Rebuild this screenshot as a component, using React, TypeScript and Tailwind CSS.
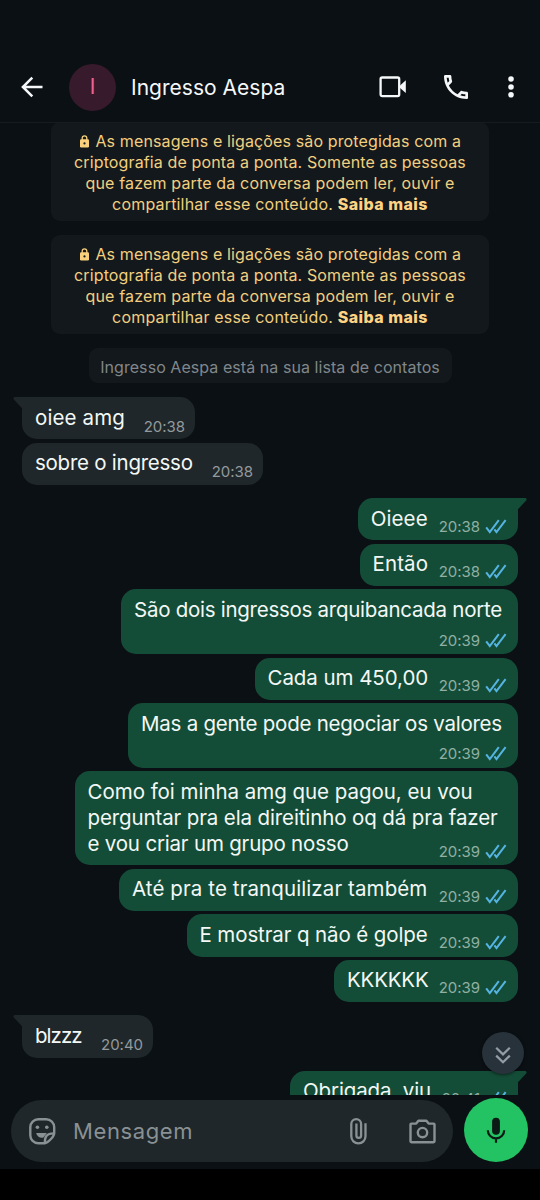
import React from "react";

type Message = {
  lines: [text: string, tracking: string][];
  time: string;
  sent?: boolean;
  first?: boolean;
  size: string;
};

const ONE = "h-[42.4px]";

const messages: Message[] = [
  { lines: [["oiee amg", "tracking-[0.12px]"]], time: "20:38", first: true, size: `${ONE} w-[173px]` },
  { lines: [["sobre o ingresso", "tracking-[-0.25px]"]], time: "20:38", size: `${ONE} w-[241px]` },
  { lines: [["Oieee", "tracking-[0.1px]"]], time: "20:38", sent: true, first: true, size: `${ONE} w-[160.3px]` },
  { lines: [["Então", "tracking-[0.1px]"]], time: "20:38", sent: true, size: `${ONE} w-[158.5px]` },
  {
    lines: [["São dois ingressos arquibancada norte", "tracking-[-0.265px]"]],
    time: "20:39",
    sent: true,
    size: "h-[65.2px] w-[397px] flex-col",
  },
  { lines: [["Cada um 450,00", "tracking-[-0.06px]"]], time: "20:39", sent: true, size: `${ONE} w-[263.5px]` },
  {
    lines: [["Mas a gente pode negociar os valores", "tracking-[-0.245px]"]],
    time: "20:39",
    sent: true,
    size: "h-[65.2px] w-[390px] flex-col",
  },
  {
    lines: [
      ["Como foi minha amg que pagou, eu vou", "tracking-[-0.03px]"],
      ["perguntar pra ela direitinho oq dá pra fazer", "tracking-[-0.12px]"],
      ["e vou criar um grupo nosso", "tracking-[-0.19px]"],
    ],
    time: "20:39",
    sent: true,
    size: "h-[94px] w-[443.5px]",
  },
  { lines: [["Até pra te tranquilizar também", "tracking-[0.1px]"]], time: "20:39", sent: true, size: `${ONE} w-[399px]` },
  { lines: [["E mostrar q não é golpe", "tracking-[-0.11px]"]], time: "20:39", sent: true, size: `${ONE} w-[331.5px]` },
  { lines: [["KKKKKK", "tracking-[-0.18px]"]], time: "20:39", sent: true, size: `${ONE} w-[184px]` },
  { lines: [["blzzz", "tracking-[-0.95px]"]], time: "20:40", first: true, size: `${ONE} w-[131px]` },
  { lines: [["Obrigada, viu", "tracking-[-0.12px]"]], time: "20:41", sent: true, first: true, size: `${ONE} w-[228px]` },
];

function Ticks() {
  return (
    <svg className="-mt-px ml-[5px] h-[18px] w-[22px]" viewBox="0 0 22 18" fill="none" stroke="#55b4e2" strokeWidth="2">
      <path d="M1.2 10.4 4.8 15.2 13.8 3.2" />
      <path d="M9.4 12.4 11.5 15.2 20.6 3.2" />
    </svg>
  );
}

function Bubble({ lines, time, sent, first, size }: Message) {
  return (
    <div
      className={[
        "relative flex shrink-0 justify-between pl-[13px] pt-[7.7px] text-[#f3f8f6]",
        size,
        sent ? "self-end bg-[#144d37] pr-[11px] pb-[4.8px]" : "self-start bg-[#1f272a] pr-[10px] pb-[3.8px]",
        first ? (sent ? "rounded-[15px] rounded-tr-none" : "rounded-[15px] rounded-tl-none") : "rounded-[15px]",
      ].join(" ")}
    >
      {first && sent && (
        <svg className="absolute top-0 -right-[9.3px] h-[14px] w-[10px]" viewBox="0 0 10 14" fill="#144d37">
          <path d="M0 0H8.3Q10.3.7 9.2 2.6L.7 11.6V14H0Z" />
        </svg>
      )}
      {first && !sent && (
        <svg className="absolute top-0 -left-[9.3px] h-[14px] w-[10px]" viewBox="0 0 10 14" fill="#1f272a">
          <path d="M10 0H1.7Q-.3.7.8 2.6L9.3 11.6V14H10Z" />
        </svg>
      )}
      <div className="min-h-0 min-w-0 flex-1 text-[20.5px] leading-[26px] whitespace-nowrap">
        {lines.map(([text, tracking]) => (
          <p key={text} className={tracking}>
            {text}
          </p>
        ))}
      </div>
      <div
        className={`flex self-end text-[15px] leading-[18px] tracking-[-0.03px] ${sent ? "text-[#8fb0a3]" : "text-[#939a9d]"}`}
      >
        {time}
        {sent && <Ticks />}
      </div>
    </div>
  );
}

function EncryptionNotice() {
  return (
    <div className="mb-[14.5px] h-[98.5px] w-[438px] shrink-0 self-center rounded-[9px] bg-[#12181b] pt-[8.6px] text-center text-[16px] leading-[21px] whitespace-nowrap text-[#f3cf80]">
      <p className="flex items-center justify-center pl-px tracking-[0.13px]">
        <svg className="mr-[6.5px] h-[13px] w-[9px]" viewBox="0 0 9 13" fill="none">
          <rect x="0" y="4.3" width="9" height="8.2" rx="1.2" fill="#f9d07b" />
          <path d="M2.2 5V3.1a2.3 2.3 0 0 1 4.6 0V5" stroke="#f9d07b" strokeWidth="1.3" />
          <circle cx="4.5" cy="8.4" r="1.1" fill="#12181b" />
        </svg>
        As mensagens e ligações são protegidas com a
      </p>
      <p className="tracking-[0.13px]">criptografia de ponta a ponta. Somente as pessoas</p>
      <p className="tracking-[0.16px]">que fazem parte da conversa podem ler, ouvir e</p>
      <p className="tracking-[0.18px]">
        compartilhar esse conteúdo. <b className="font-extrabold tracking-[0.45px] text-[#ffd384]">Saiba mais</b>
      </p>
    </div>
  );
}

function Header() {
  return (
    <header className="relative z-10 -mb-px flex h-[123px] shrink-0 items-center border-b border-[#151b1f] bg-[#0b1014] pt-[52px] pl-[20px] text-[#f5f7f8]">
      <svg className="h-[24px] w-[24px]" viewBox="0 0 24 24" fill="none" stroke="currentColor" strokeWidth="2.5">
        <path d="M22.5 12H3M12.3 2.6 2.9 12l9.4 9.4" />
      </svg>
      <div className="ml-[25px] flex h-[47px] w-[47px] items-center justify-center rounded-full bg-[#371a2b] text-[21px] text-[#f4628f]">
        I
      </div>
      <h1 className="ml-[15px] w-[247.5px] pt-px text-[21px] tracking-[0.02px] whitespace-nowrap">Ingresso Aespa</h1>
      <svg className="h-[24px] w-[28px]" viewBox="0 0 28 24" fill="none">
        <rect x="1.6" y="2.5" width="18.6" height="18.6" rx="1.6" stroke="currentColor" strokeWidth="2.3" />
        <path d="M20.5 11 26.8 5.2v12.9L20.5 12.6Z" fill="currentColor" />
      </svg>
      <svg className="ml-[33px] h-[32px] w-[32px]" viewBox="0 0 24 24" fill="currentColor">
        <path d="M6.54 5c.06.89.21 1.76.45 2.59l-1.2 1.2c-.41-1.2-.67-2.47-.76-3.79h1.51m9.86 12.02c.85.24 1.72.39 2.6.45v1.49c-1.32-.09-2.59-.35-3.8-.75l1.2-1.19M7.5 3H4c-.55 0-1 .45-1 1 0 9.39 7.61 17 17 17 .55 0 1-.45 1-1v-3.49c0-.55-.45-1-1-1-1.24 0-2.45-.2-3.57-.57a.84.84 0 0 0-.31-.05c-.26 0-.51.1-.71.29l-2.2 2.2a15.149 15.149 0 0 1-6.59-6.59l2.2-2.2c.28-.28.36-.67.25-1.02A11.36 11.36 0 0 1 8.5 4c0-.55-.45-1-1-1z" />
      </svg>
      <svg className="ml-[36.5px] h-[24px] w-[6px]" viewBox="0 0 6 24" fill="currentColor">
        <circle cx="3" cy="4" r="2.8" />
        <circle cx="3" cy="12" r="2.8" />
        <circle cx="3" cy="19.8" r="2.8" />
      </svg>
    </header>
  );
}

function Composer() {
  return (
    <footer className="flex h-[73.5px] shrink-0 items-end bg-[#0b1014] pb-[6.6px] pl-[11px]">
      <div className="flex h-[61.6px] w-[442px] items-center rounded-full bg-[#1f272a] pl-[18px] text-[#8a9195]">
        <svg className="h-[27px] w-[27px]" viewBox="0 0 27 27" fill="none" stroke="currentColor" strokeWidth="2.4">
          <path d="M25.2 15.2V9.3a8 8 0 0 0-8-8H9.3a8 8 0 0 0-8 8v8a8 8 0 0 0 8 8h6.4c3-.4 9.2-6.4 9.5-10Z" />
          <path d="M15.8 25c0-6 1.2-9.4 9.2-9.6" />
          <circle cx="8.4" cy="9.3" r="1.8" fill="currentColor" stroke="none" />
          <circle cx="17.8" cy="9.3" r="1.8" fill="currentColor" stroke="none" />
          <path d="M7.2 15h10.6l-3.4 4.6c-3.6.8-6.4-1.2-7.2-4.6Z" fill="currentColor" stroke="none" />
        </svg>
        <span className="ml-[17px] w-[277px] pt-px text-[22px] tracking-[0.6px]">Mensagem</span>
        <svg className="h-[27px] w-[17px]" viewBox="0 0 17 27" fill="none" stroke="currentColor" strokeWidth="2.3">
          <path d="M15.5 5.3v13a7.1 7.1 0 0 1-14.2 0V6.1a4.9 4.9 0 0 1 9.8 0V17.6a2.3 2.3 0 0 1-4.7 0V5.6" />
        </svg>
        <svg className="ml-[42px] h-[27px] w-[27px]" viewBox="0 0 27 27" fill="none" stroke="currentColor" strokeWidth="2.4" strokeLinejoin="round">
          <path d="M2.4 5.6H7.2L9.4 2.8H17.4L19.6 5.6H24.6a.9.9 0 0 1 .9.9V23.3a.9.9 0 0 1-.9.9H2.4a.9.9 0 0 1-.9-.9V6.5a.9.9 0 0 1 .9-.9Z" />
          <circle cx="13.5" cy="14.6" r="4.7" />
        </svg>
      </div>
      <div className="ml-[11.2px] flex h-[63.6px] w-[63.6px] items-center justify-center rounded-full bg-[#23c364]">
        <svg className="h-[27px] w-[20px]" viewBox="0 0 20 27" fill="none" stroke="#0b1a14" strokeWidth="2.2">
          <rect x="6.1" y=".7" width="7.8" height="17" rx="3.9" fill="#0b1a14" stroke="none" />
          <path d="M1.8 13.2a8.2 8.2 0 0 0 16.4 0M10 21v4.8" />
        </svg>
      </div>
    </footer>
  );
}

export default function App() {
  return (
    <div className="flex h-[1200px] w-[540px] flex-col overflow-hidden bg-black font-['Inter',sans-serif]">
      <Header />
      <main className="relative flex min-h-0 flex-1 flex-col overflow-hidden bg-[#0b1014] pr-[22px] pl-[22px]">
        <EncryptionNotice />
        <EncryptionNotice />
        <div className="mb-[14px] flex h-[35px] w-[363px] shrink-0 items-center justify-center self-center rounded-[9px] bg-[#12181b] pt-[2px] text-[16px] tracking-[0.06px] whitespace-nowrap text-[#81878b]">
          Ingresso Aespa está na sua lista de contatos
        </div>
        <div className="flex flex-col">
          {messages.map((m, i) => (
            <div key={i} className={`flex flex-col ${i === 0 ? "" : m.first ? "mt-[13px]" : "mt-[3.2px]"}`}>
              <Bubble {...m} />
            </div>
          ))}
        </div>
        <button className="absolute right-[16px] bottom-[21px] flex h-[42px] w-[42px] items-center justify-center rounded-full bg-[#27323a] shadow-[0_1px_3px_rgba(0,0,0,0.5)]">
          <svg className="mt-[3px] h-[18px] w-[16px]" viewBox="0 0 16 18" fill="none" stroke="#929da5" strokeWidth="2.2">
            <path d="m1.2 1.7 6.8 6.7 6.8-6.7M1.2 9.6 8 16.3l6.8-6.7" />
          </svg>
        </button>
      </main>
      <Composer />
      <div className="h-[31.5px] shrink-0 bg-black" />
    </div>
  );
}
